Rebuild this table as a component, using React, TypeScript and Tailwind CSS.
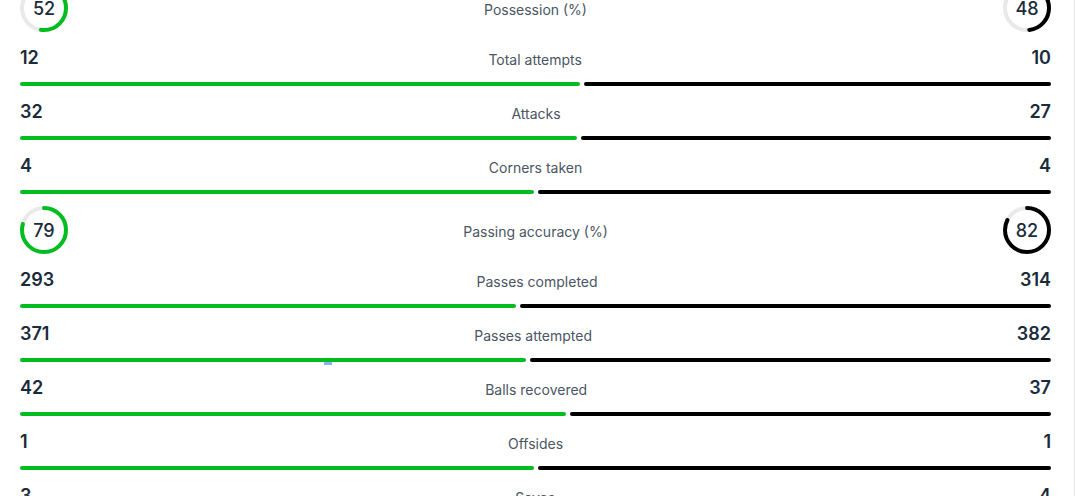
import React from 'react';

type Stat = { label: string; home: number; away: number; ring?: boolean };

const stats: Stat[] = [
  { label: 'Possession (%)', home: 52, away: 48, ring: true },
  { label: 'Total attempts', home: 12, away: 10 },
  { label: 'Attacks', home: 32, away: 27 },
  { label: 'Corners taken', home: 4, away: 4 },
  { label: 'Passing accuracy (%)', home: 79, away: 82, ring: true },
  { label: 'Passes completed', home: 293, away: 314 },
  { label: 'Passes attempted', home: 371, away: 382 },
  { label: 'Balls recovered', home: 42, away: 37 },
  { label: 'Offsides', home: 1, away: 1 },
  { label: 'Saves', home: 3, away: 4 },
];

function Ring({ value, color }: { value: number; color: string }) {
  const r = 22;
  const c = 2 * Math.PI * r;
  return (
    <div className="relative w-[48px] h-[48px] flex items-center justify-center">
      <svg width="48" height="48" viewBox="0 0 48 48" className="absolute inset-0 -rotate-90">
        <circle cx="24" cy="24" r={r} fill="none" stroke="#e9e9e9" strokeWidth="4" />
        <circle
          cx="24"
          cy="24"
          r={r}
          fill="none"
          stroke={color}
          strokeWidth="4"
          strokeLinecap="round"
          strokeDasharray={`${(c * value) / 100} ${c}`}
        />
      </svg>
      <span className="relative text-[18px] font-medium text-[#1a2b3c]">{value}</span>
    </div>
  );
}

function RingRow({ s }: { s: Stat }) {
  return (
    <div className="h-[60px] flex items-start justify-between pt-px">
      <Ring value={s.home} color="#02bd1f" />
      <span className="mt-[15px] text-[14px] text-[#4b5563]">{s.label}</span>
      <Ring value={s.away} color="#000000" />
    </div>
  );
}

function BarRow({ s }: { s: Stat }) {
  return (
    <div className="h-[54px]">
      <div className="h-[28px] flex items-center justify-between">
        <span className="text-[18px] font-semibold text-[#1a2b3c]">{s.home}</span>
        <span className="mt-[4px] text-[14px] text-[#4b5563]">{s.label}</span>
        <span className="text-[18px] font-semibold text-[#1a2b3c]">{s.away}</span>
      </div>
      <div className="mt-[11px] flex gap-[4px] h-[4px]">
        <div className="h-full rounded-full bg-[#02bd1f]" style={{ flexGrow: s.home, flexBasis: 0 }} />
        <div className="h-full rounded-full bg-black" style={{ flexGrow: s.away, flexBasis: 0 }} />
      </div>
    </div>
  );
}

export default function App() {
  return (
    <div className="w-[1076px] h-[496px] overflow-hidden bg-white" style={{ fontFamily: 'Inter, "Noto Sans", sans-serif' }}>
      <div className="relative flow-root w-[1075px] h-full border-r border-[#e6e6e6] pl-[20px] pr-[23px]">
        <div className="-mt-[17px]">
          {stats.map((s) => (s.ring ? <RingRow key={s.label} s={s} /> : <BarRow key={s.label} s={s} />))}
        </div>
        <div className="absolute left-[324px] top-[362px] w-[8px] h-[3px] bg-[#8fb0f0]" />
      </div>
    </div>
  );
}
